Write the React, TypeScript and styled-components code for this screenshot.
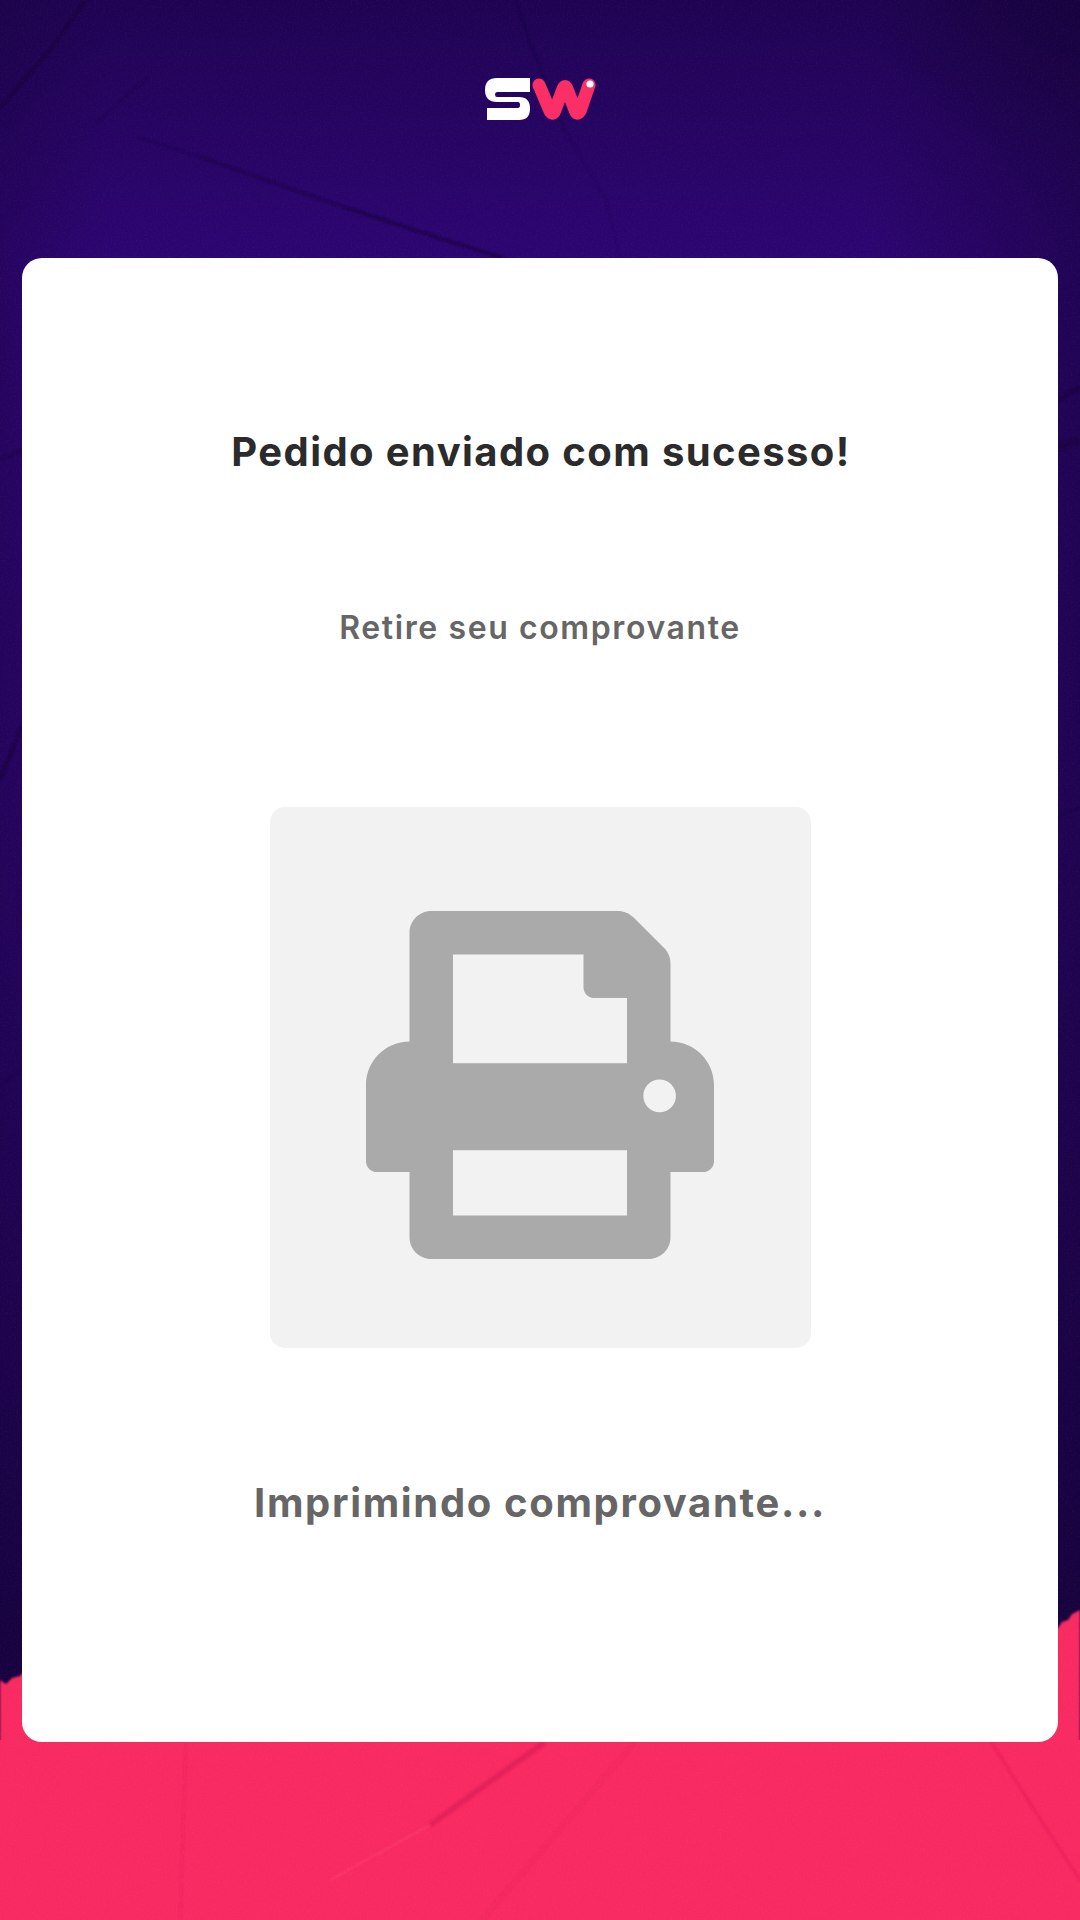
import React from "react";
import styled, { createGlobalStyle } from "styled-components";

const Global = createGlobalStyle`
  html, body { margin: 0; padding: 0; background: #1b0046; }
  * { box-sizing: border-box; }
`;

const Page = styled.main`
  position: relative;
  width: 1080px;
  height: 1920px;
  overflow: hidden;
  display: flex;
  flex-direction: column;
  align-items: center;
  font-family: Inter, "Liberation Sans", sans-serif;
`;

const Backdrop = styled.svg`
  position: absolute;
  inset: 0;
  width: 1080px;
  height: 1920px;
`;

const Header = styled.header`
  position: relative;
  height: 258px;
  width: 100%;
  display: flex;
  justify-content: center;
  padding-top: 77px;
`;

const LogoMark = styled.svg`
  display: block;
  width: 112px;
  height: 44px;
`;

const Card = styled.section`
  position: relative;
  width: 1036px;
  height: 1484px;
  background: #ffffff;
  border-radius: 20px;
  display: flex;
  flex-direction: column;
  align-items: center;
  padding-top: 170px;
`;

const Title = styled.h1`
  margin: 0;
  padding-left: 2px;
  font-size: 40px;
  line-height: 48px;
  font-weight: 700;
  letter-spacing: 1.4px;
  color: #2b2b2b;
  white-space: nowrap;
`;

const Subtitle = styled.h2`
  margin: 132px 0 0;
  font-size: 32px;
  line-height: 40px;
  font-weight: 600;
  letter-spacing: 1.6px;
  color: #666666;
  white-space: nowrap;
`;

const IconPanel = styled.div`
  margin-top: 159px;
  width: 541px;
  height: 541px;
  padding-top: 15px;
  background: #f2f2f2;
  border-radius: 15px;
  display: flex;
  align-items: center;
  justify-content: center;
`;

const PrinterIcon = styled.svg`
  display: block;
  width: 348px;
  height: 348px;
  fill: #aaaaaa;
`;

const Status = styled.p`
  margin: 131px 0 0;
  font-size: 40px;
  line-height: 48px;
  font-weight: 650;
  letter-spacing: 1.65px;
  color: #666666;
  white-space: nowrap;
`;

const Background = () => (
  <Backdrop viewBox="0 0 1080 1920" aria-hidden="true">
    <defs>
      <linearGradient id="base" x1="0" y1="0" x2="0" y2="1">
        <stop offset="0" stopColor="#1f0352" />
        <stop offset="0.13" stopColor="#2d0571" />
        <stop offset="0.4" stopColor="#2a056b" />
        <stop offset="0.62" stopColor="#23045a" />
        <stop offset="0.86" stopColor="#180342" />
        <stop offset="1" stopColor="#180342" />
      </linearGradient>
      <linearGradient id="side" x1="0" y1="0" x2="1" y2="0">
        <stop offset="0" stopColor="#150238" stopOpacity="0.3" />
        <stop offset="0.1" stopColor="#150238" stopOpacity="0" />
        <stop offset="0.8" stopColor="#150238" stopOpacity="0" />
        <stop offset="1" stopColor="#150238" stopOpacity="0.5" />
      </linearGradient>
      <radialGradient id="corner" cx="1" cy="0" r="0.42">
        <stop offset="0" stopColor="#150238" stopOpacity="0.5" />
        <stop offset="1" stopColor="#150238" stopOpacity="0" />
      </radialGradient>
      <filter id="grain" x="0" y="0" width="100%" height="100%">
        <feTurbulence type="fractalNoise" baseFrequency="0.55" numOctaves="2" seed="4" />
        <feColorMatrix values="0 0 0 0 1  0 0 0 0 1  0 0 0 0 1  0 0 0 0.22 -0.08" />
      </filter>
      <filter id="soft"><feGaussianBlur stdDeviation="1" /></filter>
      <filter id="softer"><feGaussianBlur stdDeviation="0.8" /></filter>
    </defs>
    <rect width="1080" height="1920" fill="url(#base)" />
    <rect width="1080" height="1920" fill="url(#side)" />
    <rect x="580" width="500" height="400" fill="url(#corner)" />
    <g fill="none" stroke="#14022f" filter="url(#soft)">
      <path d="M86 0 L50 50 L0 108" strokeWidth="2" opacity="0.65" />
      <path d="M148 77 L96 123" strokeWidth="2" opacity="0.18" />
      <path d="M138 137 L200 157" strokeWidth="2" opacity="0.25" />
      <path d="M200 157 L344 207" strokeWidth="2.5" opacity="0.45" />
      <path d="M344 207 L430 235 L503 258" strokeWidth="3" opacity="0.6" />
      <path d="M516 0 L530 43 L565 130" strokeWidth="2" opacity="0.3" />
      <path d="M565 130 L606 200 L620 258" strokeWidth="2" opacity="0.12" />
      <path d="M0 460 L22 450" strokeWidth="2" opacity="0.5" />
      <path d="M22 725 L0 780" strokeWidth="3" opacity="0.6" />
      <path d="M0 1085 L22 1070" strokeWidth="2" opacity="0.2" />
      <path d="M1058 400 L1080 387" strokeWidth="3" opacity="0.6" />
      <path d="M1058 447 L1080 440" strokeWidth="7" opacity="0.4" />
      <path d="M1058 815 L1080 808" strokeWidth="1.5" opacity="0.3" />
    </g>
    <path
      d="M0 1680 L6 1684 L12 1678 L20 1676 L30 1666 L120 1680 L400 1720 L800 1700 L1058 1628 L1062 1622 L1068 1620 L1072 1614 L1080 1610 L1080 1920 L0 1920 Z"
      fill="#f82a62"
      filter="url(#softer)"
    />
    <rect y="1740" width="1080" height="180" fill="#f82a62" />
    <g fill="none" stroke="#e01e56" filter="url(#soft)">
      <path d="M544 1743 L510 1767 L430 1825" strokeWidth="5" opacity="0.9" />
      <path d="M186 1743 L180 1920" strokeWidth="1.5" opacity="0.45" />
      <path d="M992 1743 L1026 1797 L1080 1880" strokeWidth="2" opacity="0.7" />
      <path d="M634 1743 L482 1920" strokeWidth="4" opacity="0.22" />
    </g>
    <path d="M430 1825 L330 1880" fill="none" stroke="#ff4a78" strokeWidth="1.5" opacity="0.5" filter="url(#soft)" />
    <rect width="1080" height="1920" filter="url(#grain)" opacity="0.28" />
  </Backdrop>
);

const Logo = () => (
  <LogoMark viewBox="484 77 112 44" role="img" aria-label="SW">
    <path
      fill="#ffffff"
      d="M530 78 H497 Q485 78 485 90 Q485 102 497 102 H518 Q520 102 520 105 Q520 108 518 108 H487 V120 H519 Q530 120 530 108.5 Q530 97 519 97 H497 Q495 97 495 94.5 Q495 92 497 92 H530 Z"
    />
    <path
      fill="none"
      stroke="#f92f65"
      strokeWidth="13"
      strokeLinecap="round"
      strokeLinejoin="round"
      d="M539 85 L550 111 Q553 116 555 110 L563 89 Q565 84 567 89 L575 110 Q577 116 580 111 L589 85"
    />
    <circle cx="590" cy="84" r="3.6" fill="#ffffff" />
  </LogoMark>
);

const Printer = () => (
  <PrinterIcon viewBox="0 0 512 512" aria-hidden="true">
    <path d="M448 192V77.25c0-8.49-3.37-16.62-9.37-22.63L393.37 9.37c-6-6-14.14-9.37-22.63-9.37H96C78.33 0 64 14.33 64 32v160c-35.35 0-64 28.65-64 64v112c0 8.84 7.16 16 16 16h48v96c0 17.67 14.33 32 32 32h320c17.67 0 32-14.33 32-32v-96h48c8.84 0 16-7.16 16-16V256c0-35.35-28.65-64-64-64zm-64 256H128v-96h256v96zm0-224H128V64h192v48c0 8.84 7.16 16 16 16h48v96zm48 72c-13.25 0-24-10.75-24-24 0-13.26 10.75-24 24-24s24 10.74 24 24c0 13.25-10.75 24-24 24z" />
  </PrinterIcon>
);

export default function App() {
  return (
    <>
      <Global />
      <Page>
        <Background />
        <Header>
          <Logo />
        </Header>
        <Card>
          <Title>Pedido enviado com sucesso!</Title>
          <Subtitle>Retire seu comprovante</Subtitle>
          <IconPanel>
            <Printer />
          </IconPanel>
          <Status>Imprimindo comprovante...</Status>
        </Card>
      </Page>
    </>
  );
}
